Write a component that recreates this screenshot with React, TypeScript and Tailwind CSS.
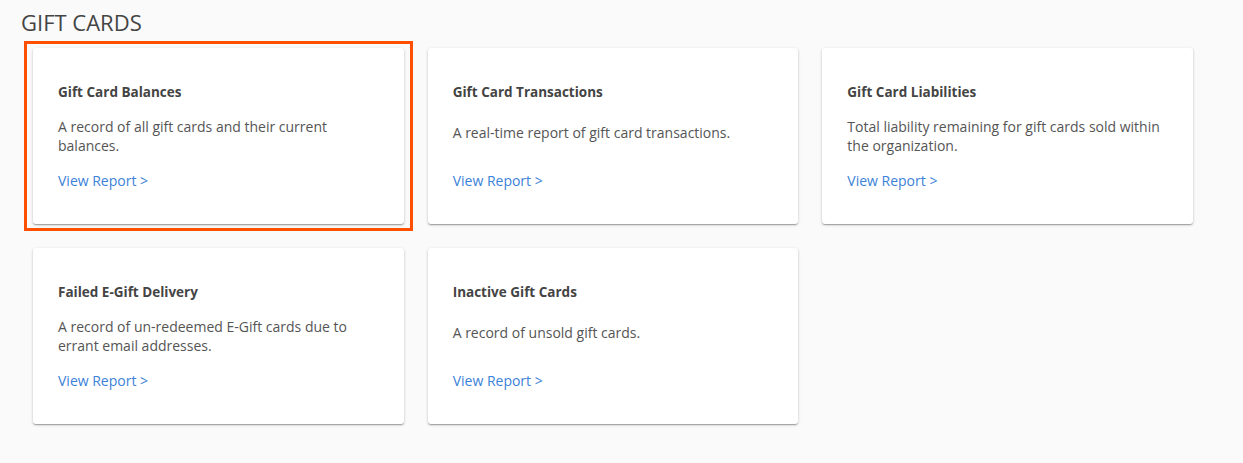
import React from 'react';

type Report = {
  id: number;
  title: string;
  description: string;
  oneLine?: boolean;
};

const reports: Report[] = [
  { id: 1, title: 'Gift Card Balances', description: 'A record of all gift cards and their current balances.' },
  { id: 2, title: 'Gift Card Transactions', description: 'A real-time report of gift card transactions.', oneLine: true },
  { id: 3, title: 'Gift Card Liabilities', description: 'Total liability remaining for gift cards sold within the organization.' },
  { id: 4, title: 'Failed E-Gift Delivery', description: 'A record of un-redeemed E-Gift cards due to errant email addresses.' },
  { id: 5, title: 'Inactive Gift Cards', description: 'A record of unsold gift cards.', oneLine: true },
];

const ReportCard = ({ report, highlighted }: { report: Report; highlighted?: boolean }) => (
  <div className="relative">
    {highlighted && (
      <div className="absolute -left-[9px] -right-[9px] -top-[7px] -bottom-[7px] border-[3.5px] border-[#ff4f00] pointer-events-none" />
    )}
    <div className="h-[176px] rounded-[3px] bg-white pl-[25px] pr-[20px] pt-[36px] shadow-[0_1px_3px_rgba(0,0,0,0.22),0_1px_1px_rgba(0,0,0,0.14),0_2px_1px_-1px_rgba(0,0,0,0.12)]">
      <h3 className="text-[13.5px] font-bold leading-[16px] text-[#444]">{report.title}</h3>
      <div className={`mt-[17px] h-[38px] ${report.oneLine ? 'pt-[6px]' : ''}`}>
        <p className="text-[14px] leading-[19px] text-[#555] pr-[12px]">{report.description}</p>
      </div>
      <a href="#" className="mt-[16px] inline-block text-[14px] leading-[19px] text-[#3b82d8]">
        View Report &gt;
      </a>
    </div>
  </div>
);

export default function App() {
  return (
    <div className="min-h-[463px] bg-[#fafafa] pl-[21px] pt-[10px] font-['Open_Sans',sans-serif]">
      <h2 className="text-[22px] leading-[24px] text-[#444] uppercase">Gift Cards</h2>
      <div className="mt-[14px] ml-[12px] grid w-[1160px] grid-cols-3 gap-[24px]">
        {reports.map((r) => (
          <ReportCard key={r.id} report={r} highlighted={r.id === 1} />
        ))}
      </div>
    </div>
  );
}
